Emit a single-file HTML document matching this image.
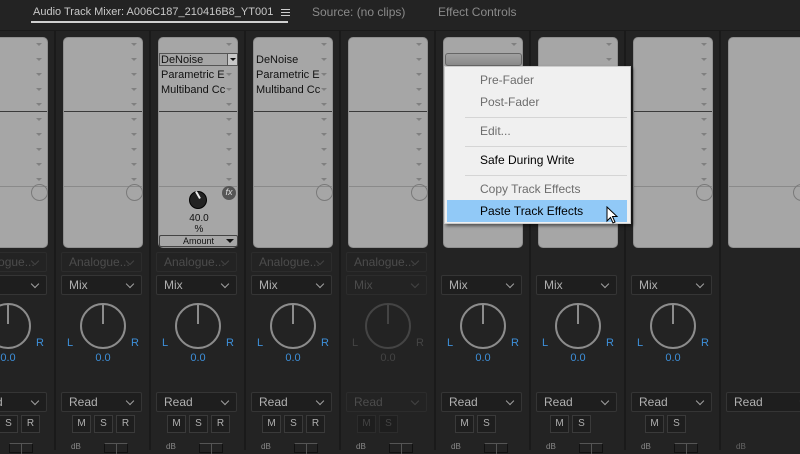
<!DOCTYPE html>
<html><head><meta charset="utf-8"><style>
*{margin:0;padding:0;box-sizing:border-box}
body{width:800px;height:450px;overflow:hidden;background:#232323;font-family:"Liberation Sans",sans-serif;position:relative}
.top{position:absolute;left:0;top:0;width:800px;height:31px;background:#232323;border-bottom:1px solid #1a1a1a}
.t{position:absolute;top:5px;font-size:12px;color:#8a8a8a;white-space:nowrap}
.sep{position:absolute;top:31px;width:2px;height:419px;background:#1a1a1a}
.col{position:absolute;top:0;width:80px;height:450px}
.panel{position:absolute;left:0;top:37px;width:80px;height:211px;background:#a6a6a6;border-radius:5px;border:1px solid #8f8f8f}
.hl{position:absolute;left:0;width:78px;height:1px}
.ar{position:absolute;right:5px;width:0;height:0;border-left:3px solid transparent;border-right:3px solid transparent;border-top:3px solid #808080}
.circ{position:absolute;left:62px;top:146px;width:17px;height:17px;border-radius:50%;border:1px solid #7a7a7a}
.fxt{position:absolute;left:2px;font-size:11px;color:#111;white-space:nowrap;overflow:hidden;width:64px}
.dd{position:absolute;left:-2px;width:81px;height:20px;border:1px solid #353535;background:#1e1e1e;border-radius:2px;font-size:12px;color:#b0b0b0;padding:2px 0 0 7px}
.dd::after{content:"";position:absolute;right:8px;top:5px;width:5px;height:5px;border-right:1px solid #a0a0a0;border-bottom:1px solid #a0a0a0;transform:rotate(45deg)}
.dim{color:#4c4c4c;border-color:#2c2c2c;background:#232323}
.dim::after{border-color:#444}
.lr{position:absolute;top:337px;font-size:11px;color:#3d8fd9}
.val{position:absolute;left:0;width:80px;text-align:center;top:352px;font-size:11px;color:#3d8fd9}
.b{position:absolute;top:415px;width:19px;height:18px;border:1px solid #3a3a3a;background:#1e1e1e;font-size:10px;color:#b0b0b0;text-align:center;line-height:16px}
.db{position:absolute;left:8px;top:442px;font-size:8px;color:#888}
.bx{position:absolute;left:41px;top:443px;width:24px;height:10px;border:1px solid #111;border-top:1px solid #555}
.bx::after{content:"";position:absolute;left:11px;top:0;width:1px;height:10px;background:#555}
.menu{position:absolute;left:444px;top:66px;width:187px;height:158px;background:#f0f0f0;border:1px solid #ccc;box-shadow:2px 2px 3px rgba(0,0,0,.5)}
.mi{position:absolute;left:35px;font-size:12px;white-space:nowrap}
.ms{position:absolute;left:20px;width:162px;height:1px;background:#d5d5d5}
</style></head><body>
<div class="top">
<div class="t" style="left:33px;color:#c8c8c8;font-size:11px;top:6px">Audio Track Mixer: A006C187_210416B8_YT001</div>
<div style="position:absolute;left:281px;top:9px;width:9px;height:1px;background:#ccc;box-shadow:0 3px 0 #ccc,0 6px 0 #ccc"></div>
<div style="position:absolute;left:31px;top:21px;width:257px;height:2px;background:#d0d0d0"></div>
<div class="t" style="left:312px">Source: (no clips)</div>
<div class="t" style="left:438px">Effect Controls</div>
</div>
<div class="sep" style="left:54px"></div><div class="sep" style="left:149px"></div><div class="sep" style="left:244px"></div><div class="sep" style="left:339px"></div><div class="sep" style="left:434px"></div><div class="sep" style="left:529px"></div><div class="sep" style="left:624px"></div><div class="sep" style="left:719px"></div>

<div class="col" style="left:-32px">
<div class="panel"><div class="hl" style="top:73px;background:#3a3a3a"></div><div class="hl" style="top:148px;background:#8a8a8a"></div>
<div class="ar" style="top:5px"></div><div class="ar" style="top:20px"></div><div class="ar" style="top:35px"></div><div class="ar" style="top:50px"></div><div class="ar" style="top:65px"></div><div class="ar" style="top:80px"></div><div class="ar" style="top:95px"></div><div class="ar" style="top:110px"></div><div class="ar" style="top:125px"></div><div class="ar" style="top:140px"></div><div class="circ"></div></div>
<div class="dd dim" style="top:252px">Analogue...</div><div class="dd" style="top:275px">Mix</div>
<svg style="position:absolute;left:16px;top:302px" width="48" height="48"><circle cx="24" cy="24" r="22" fill="none" stroke="#8c8c8c" stroke-width="2"/><line x1="24" y1="2" x2="24" y2="22" stroke="#8c8c8c" stroke-width="2"/></svg>
<div class="lr" style="left:4px">L</div><div class="lr" style="left:68px">R</div><div class="val">0.0</div>
<div class="dd" style="top:392px">Read</div>
<div class="b" style="left:9px">M</div><div class="b" style="left:31px">S</div><div class="b" style="left:53px">R</div>
<div class="bx"></div>
</div>

<div class="col" style="left:63px">
<div class="panel"><div class="hl" style="top:73px;background:#3a3a3a"></div><div class="hl" style="top:148px;background:#8a8a8a"></div>
<div class="ar" style="top:5px"></div><div class="ar" style="top:20px"></div><div class="ar" style="top:35px"></div><div class="ar" style="top:50px"></div><div class="ar" style="top:65px"></div><div class="ar" style="top:80px"></div><div class="ar" style="top:95px"></div><div class="ar" style="top:110px"></div><div class="ar" style="top:125px"></div><div class="ar" style="top:140px"></div><div class="circ"></div></div>
<div class="dd dim" style="top:252px">Analogue...</div><div class="dd" style="top:275px">Mix</div>
<svg style="position:absolute;left:16px;top:302px" width="48" height="48"><circle cx="24" cy="24" r="22" fill="none" stroke="#8c8c8c" stroke-width="2"/><line x1="24" y1="2" x2="24" y2="22" stroke="#8c8c8c" stroke-width="2"/></svg>
<div class="lr" style="left:4px">L</div><div class="lr" style="left:68px">R</div><div class="val">0.0</div>
<div class="dd" style="top:392px">Read</div>
<div class="b" style="left:9px">M</div><div class="b" style="left:31px">S</div><div class="b" style="left:53px">R</div>
<div class="db">dB</div><div class="bx"></div>
</div>

<div class="col" style="left:158px">
<div class="panel"><div class="hl" style="top:73px;background:#3a3a3a"></div><div class="hl" style="top:148px;background:#8a8a8a"></div>
<div class="ar" style="top:5px"></div><div class="ar" style="top:35px"></div><div class="ar" style="top:50px"></div><div class="ar" style="top:65px"></div><div class="ar" style="top:80px"></div><div class="ar" style="top:95px"></div><div class="ar" style="top:110px"></div><div class="ar" style="top:125px"></div><div class="ar" style="top:140px"></div>
<div style="position:absolute;left:0;top:15px;width:79px;height:13px;border:1px solid #555"></div>
<div style="position:absolute;left:68px;top:15px;width:11px;height:13px;border:1px solid #555;background:#c8c8c8"></div>
<div style="position:absolute;left:71px;top:20px;border-left:3px solid transparent;border-right:3px solid transparent;border-top:3px solid #111"></div>
<div class="fxt" style="top:16px">DeNoise</div><div class="fxt" style="top:31px">Parametric E</div><div class="fxt" style="top:46px">Multiband Cc</div>
<div style="position:absolute;left:30px;top:153px;width:18px;height:18px;border-radius:50%;background:#222;border:1px solid #000"></div>
<div style="position:absolute;left:38px;top:153px;width:2px;height:8px;background:#eee;transform:rotate(-30deg)"></div>
<div style="position:absolute;left:63px;top:148px;width:14px;height:14px;border-radius:50%;background:#555;color:#ddd;font-size:9px;font-style:italic;text-align:center;line-height:13px">fx</div>
<div style="position:absolute;left:0;width:80px;text-align:center;top:175px;font-size:10px;color:#111">40.0</div>
<div style="position:absolute;left:0;width:80px;text-align:center;top:186px;font-size:10px;color:#111">%</div>
<div style="position:absolute;left:0;top:197px;width:79px;height:12px;border:1px solid #444;border-radius:2px;font-size:9px;color:#111;text-align:center;line-height:10px">Amount<span style="position:absolute;right:3px;top:3px;border-left:4px solid transparent;border-right:4px solid transparent;border-top:4px solid #111"></span></div>
</div>
<div class="dd dim" style="top:252px">Analogue...</div><div class="dd" style="top:275px">Mix</div>
<svg style="position:absolute;left:16px;top:302px" width="48" height="48"><circle cx="24" cy="24" r="22" fill="none" stroke="#8c8c8c" stroke-width="2"/><line x1="24" y1="2" x2="24" y2="22" stroke="#8c8c8c" stroke-width="2"/></svg>
<div class="lr" style="left:4px">L</div><div class="lr" style="left:68px">R</div><div class="val">0.0</div>
<div class="dd" style="top:392px">Read</div>
<div class="b" style="left:9px">M</div><div class="b" style="left:31px">S</div><div class="b" style="left:53px">R</div>
<div class="db">dB</div><div class="bx"></div>
</div>

<div class="col" style="left:253px">
<div class="panel"><div class="hl" style="top:73px;background:#3a3a3a"></div><div class="hl" style="top:148px;background:#8a8a8a"></div>
<div class="ar" style="top:5px"></div><div class="ar" style="top:20px"></div><div class="ar" style="top:35px"></div><div class="ar" style="top:50px"></div><div class="ar" style="top:65px"></div><div class="ar" style="top:80px"></div><div class="ar" style="top:95px"></div><div class="ar" style="top:110px"></div><div class="ar" style="top:125px"></div><div class="ar" style="top:140px"></div><div class="circ"></div>
<div class="fxt" style="top:16px">DeNoise</div><div class="fxt" style="top:31px">Parametric E</div><div class="fxt" style="top:46px">Multiband Cc</div></div>
<div class="dd dim" style="top:252px">Analogue...</div><div class="dd" style="top:275px">Mix</div>
<svg style="position:absolute;left:16px;top:302px" width="48" height="48"><circle cx="24" cy="24" r="22" fill="none" stroke="#8c8c8c" stroke-width="2"/><line x1="24" y1="2" x2="24" y2="22" stroke="#8c8c8c" stroke-width="2"/></svg>
<div class="lr" style="left:4px">L</div><div class="lr" style="left:68px">R</div><div class="val">0.0</div>
<div class="dd" style="top:392px">Read</div>
<div class="b" style="left:9px">M</div><div class="b" style="left:31px">S</div><div class="b" style="left:53px">R</div>
<div class="db">dB</div><div class="bx"></div>
</div>

<div class="col" style="left:348px">
<div class="panel"><div class="hl" style="top:73px;background:#3a3a3a"></div><div class="hl" style="top:148px;background:#8a8a8a"></div>
<div class="ar" style="top:5px"></div><div class="ar" style="top:20px"></div><div class="ar" style="top:35px"></div><div class="ar" style="top:50px"></div><div class="ar" style="top:65px"></div><div class="ar" style="top:80px"></div><div class="ar" style="top:95px"></div><div class="ar" style="top:110px"></div><div class="ar" style="top:125px"></div><div class="ar" style="top:140px"></div><div class="circ"></div></div>
<div class="dd dim" style="top:252px">Analogue...</div><div class="dd dim" style="top:275px">Mix</div>
<svg style="position:absolute;left:16px;top:302px" width="48" height="48"><circle cx="24" cy="24" r="22" fill="none" stroke="#444" stroke-width="2"/><line x1="24" y1="2" x2="24" y2="22" stroke="#444" stroke-width="2"/></svg>
<div class="lr" style="left:4px;color:#444">L</div><div class="lr" style="left:68px;color:#444">R</div><div class="val" style="color:#444">0.0</div>
<div class="dd dim" style="top:392px">Read</div>
<div class="b" style="left:9px;color:#444;border-color:#2c2c2c">M</div><div class="b" style="left:31px;color:#444;border-color:#2c2c2c">S</div>
<div class="db">dB</div><div class="bx"></div>
</div>

<div class="col" style="left:443px">
<div class="panel"><div class="hl" style="top:73px;background:#3a3a3a"></div><div class="hl" style="top:148px;background:#8a8a8a"></div>
<div class="ar" style="top:5px"></div><div class="ar" style="top:35px"></div><div class="ar" style="top:50px"></div><div class="ar" style="top:65px"></div><div class="ar" style="top:80px"></div><div class="ar" style="top:95px"></div><div class="ar" style="top:110px"></div><div class="ar" style="top:125px"></div><div class="ar" style="top:140px"></div><div class="circ"></div>
<div style="position:absolute;left:1px;top:15px;width:77px;height:13px;border:1px solid #666;border-radius:3px;background:linear-gradient(#a0a0a0,#8a8a8a)"></div></div>
<div class="dd" style="top:275px">Mix</div>
<svg style="position:absolute;left:16px;top:302px" width="48" height="48"><circle cx="24" cy="24" r="22" fill="none" stroke="#8c8c8c" stroke-width="2"/><line x1="24" y1="2" x2="24" y2="22" stroke="#8c8c8c" stroke-width="2"/></svg>
<div class="lr" style="left:4px">L</div><div class="lr" style="left:68px">R</div><div class="val">0.0</div>
<div class="dd" style="top:392px">Read</div>
<div class="b" style="left:12px">M</div><div class="b" style="left:34px">S</div>
<div class="db">dB</div><div class="bx"></div>
</div>

<div class="col" style="left:538px">
<div class="panel"><div class="hl" style="top:73px;background:#3a3a3a"></div><div class="hl" style="top:148px;background:#8a8a8a"></div>
<div class="ar" style="top:5px"></div><div class="ar" style="top:20px"></div><div class="ar" style="top:35px"></div><div class="ar" style="top:50px"></div><div class="ar" style="top:65px"></div><div class="ar" style="top:80px"></div><div class="ar" style="top:95px"></div><div class="ar" style="top:110px"></div><div class="ar" style="top:125px"></div><div class="ar" style="top:140px"></div><div class="circ"></div></div>
<div class="dd" style="top:275px">Mix</div>
<svg style="position:absolute;left:16px;top:302px" width="48" height="48"><circle cx="24" cy="24" r="22" fill="none" stroke="#8c8c8c" stroke-width="2"/><line x1="24" y1="2" x2="24" y2="22" stroke="#8c8c8c" stroke-width="2"/></svg>
<div class="lr" style="left:4px">L</div><div class="lr" style="left:68px">R</div><div class="val">0.0</div>
<div class="dd" style="top:392px">Read</div>
<div class="b" style="left:12px">M</div><div class="b" style="left:34px">S</div>
<div class="db">dB</div><div class="bx"></div>
</div>

<div class="col" style="left:633px">
<div class="panel"><div class="hl" style="top:73px;background:#3a3a3a"></div><div class="hl" style="top:148px;background:#8a8a8a"></div>
<div class="ar" style="top:5px"></div><div class="ar" style="top:20px"></div><div class="ar" style="top:35px"></div><div class="ar" style="top:50px"></div><div class="ar" style="top:65px"></div><div class="ar" style="top:80px"></div><div class="ar" style="top:95px"></div><div class="ar" style="top:110px"></div><div class="ar" style="top:125px"></div><div class="ar" style="top:140px"></div><div class="circ"></div></div>
<div class="dd" style="top:275px">Mix</div>
<svg style="position:absolute;left:16px;top:302px" width="48" height="48"><circle cx="24" cy="24" r="22" fill="none" stroke="#8c8c8c" stroke-width="2"/><line x1="24" y1="2" x2="24" y2="22" stroke="#8c8c8c" stroke-width="2"/></svg>
<div class="lr" style="left:4px">L</div><div class="lr" style="left:68px">R</div><div class="val">0.0</div>
<div class="dd" style="top:392px">Read</div>
<div class="b" style="left:12px">M</div><div class="b" style="left:34px">S</div>
<div class="db">dB</div><div class="bx"></div>
</div>

<div class="col" style="left:728px">
<div class="panel" style="width:90px"><div class="hl" style="top:148px;background:#8a8a8a"></div><div class="circ" style="left:64px"></div></div>
<div class="dd" style="top:392px;width:90px">Read</div>
<div class="db" style="color:#666">dB</div>
</div>

<div class="menu">
<div class="mi" style="top:6px;color:#6d6d6d">Pre-Fader</div>
<div class="mi" style="top:28px;color:#6d6d6d">Post-Fader</div>
<div class="ms" style="top:50px"></div>
<div class="mi" style="top:57px;color:#6d6d6d">Edit...</div>
<div class="ms" style="top:79px"></div>
<div class="mi" style="top:86px;color:#000">Safe During Write</div>
<div class="ms" style="top:108px"></div>
<div class="mi" style="top:115px;color:#6d6d6d">Copy Track Effects</div>
<div style="position:absolute;left:2px;top:133px;width:180px;height:22px;background:#91c9f7"></div>
<div class="mi" style="top:137px;color:#000">Paste Track Effects</div>
<svg style="position:absolute;left:161px;top:139px" width="14" height="20"><path d="M1 1 L1 15 L4.5 11.5 L7 17 L9 16 L6.5 10.5 L11 10.5 Z" fill="#fff" stroke="#000" stroke-width="1"/></svg>
</div>
</body></html>
